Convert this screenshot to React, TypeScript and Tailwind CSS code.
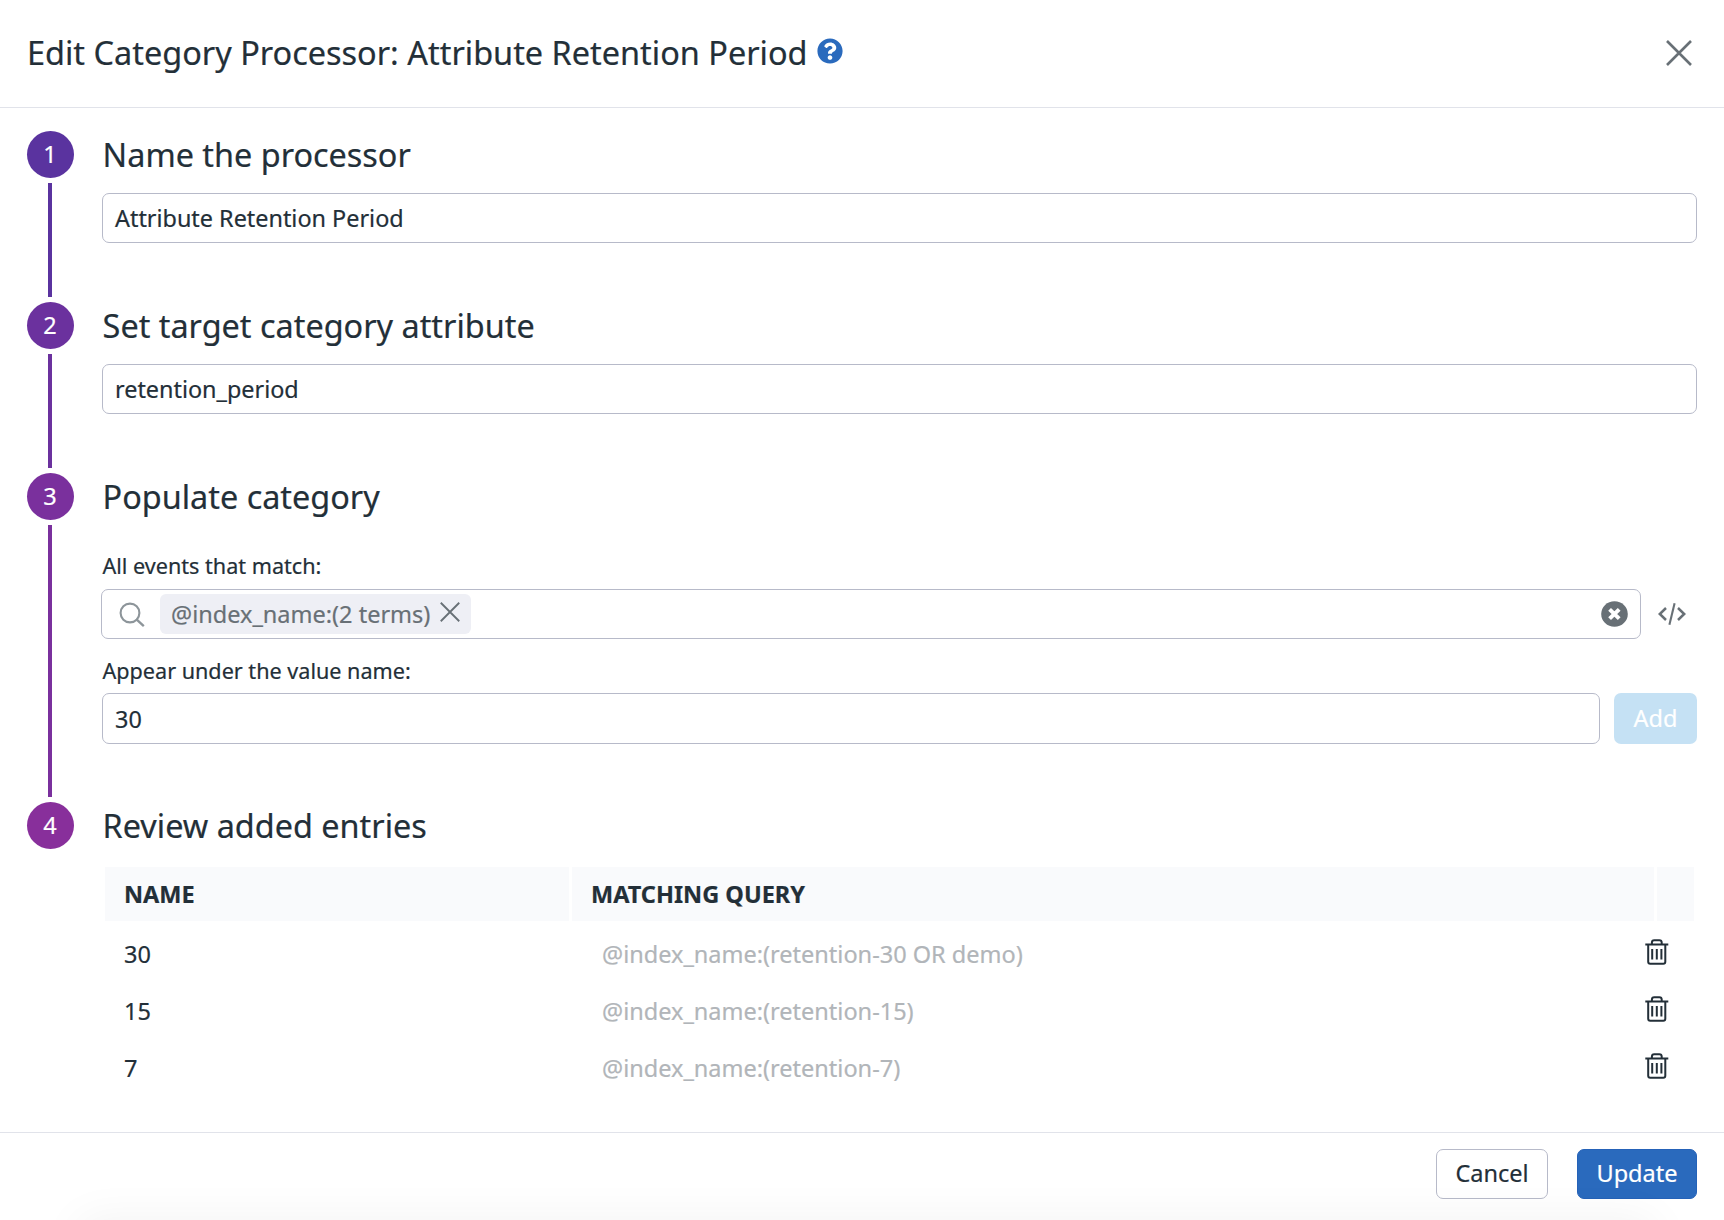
import React from "react";

const ENTRIES = [
  { name: "30", query: "@index_name:(retention-30 OR demo)" },
  { name: "15", query: "@index_name:(retention-15)" },
  { name: "7", query: "@index_name:(retention-7)" },
];

function CrossIcon({ className, width }: { className: string; width: number }) {
  return (
    <svg viewBox="0 0 26 26" className={className} fill="none" stroke="currentColor" strokeWidth={width}>
      <path d="M1 1 25 25M25 1 1 25" />
    </svg>
  );
}

function HelpIcon() {
  return (
    <svg viewBox="0 0 512 512" className="h-[26px] w-[26px] text-[#2a6abd]" fill="currentColor">
      <path d="M504 256c0 136.997-111.043 248-248 248S8 392.997 8 256C8 119.083 119.043 8 256 8s248 111.083 248 248zM262.655 90c-54.497 0-89.255 22.957-116.549 63.758-3.536 5.286-2.353 12.415 2.715 16.258l34.699 26.31c5.205 3.947 12.621 3.008 16.665-2.122 17.864-22.658 30.113-35.797 57.303-35.797 20.429 0 45.698 13.148 45.698 32.958 0 14.976-12.363 22.667-32.534 33.976C247.128 238.528 216 254.941 216 296v4c0 6.627 5.373 12 12 12h56c6.627 0 12-5.373 12-12v-1.333c0-28.462 83.186-29.647 83.186-106.667 0-58.002-60.165-102-116.531-102zM256 338c-25.365 0-46 20.635-46 46 0 25.364 20.635 46 46 46s46-20.636 46-46c0-25.365-20.635-46-46-46z" />
    </svg>
  );
}

function SearchIcon() {
  return (
    <svg viewBox="0 0 26 26" className="mt-px h-[26px] w-[26px] text-[#8d959a]" fill="none" stroke="currentColor" strokeWidth="2.1">
      <circle cx="11" cy="11" r="9.4" />
      <path d="m17.2 17.2 7.6 7" strokeWidth="2.4" />
    </svg>
  );
}

function ClearIcon() {
  return (
    <svg viewBox="0 0 27 26" className="h-[26px] w-[27px] text-[#687076]">
      <ellipse cx="13.5" cy="13" rx="13.3" ry="12.8" fill="currentColor" />
      <path d="m8.6 8.4 9.6 9.2m0-9.2-9.6 9.2" stroke="#fff" strokeWidth="4" fill="none" />
    </svg>
  );
}

function CodeIcon() {
  return (
    <svg viewBox="0 0 28 22" className="h-[22px] w-[28px] text-[#687076]" fill="none" stroke="currentColor" strokeWidth="2.5">
      <path d="M8 5 1.8 11 8 17M20 5l6.2 6L20 17" />
      <path d="M16.6.3 11.4 21.7" strokeWidth="2.1" />
    </svg>
  );
}

function TrashIcon() {
  return (
    <svg viewBox="0 0 24 26" className="h-[26px] w-[24px] text-[#232f38]" fill="none" stroke="currentColor" strokeWidth="2">
      <path d="M.3 5.6h23M3.2 5.6v17.2q0 2 2 2h13.1q2 0 2-2V5.6M6.9 5.6V3.6q0-2.4 2.4-2.4h5q2.4 0 2.4 2.4v2" />
      <path d="M7.2 9.9v10.6M11.8 9.9v10.6M16.4 9.9v10.6" strokeWidth="2" />
    </svg>
  );
}

function Step({
  n,
  dot,
  line,
  size,
  title,
  children,
}: {
  n: number;
  dot: string;
  line?: string;
  size: string;
  title: string;
  children: React.ReactNode;
}) {
  return (
    <section className={"flex " + size}>
      <div className="flex w-[47px] shrink-0 flex-col items-center">
        <div className={"flex h-[47px] w-[47px] shrink-0 items-center justify-center rounded-full pr-px pb-[2px] text-[23.5px] leading-[44px] text-white " + dot}>
          {n}
        </div>
        {line && <div className={"mt-[5px] mr-px mb-[5px] w-[4px] grow " + line} />}
      </div>
      <div className="ml-[28px] min-w-0 grow">
        <h2 className="h-[62px] pl-[0.6px] text-[32.4px] leading-[47px] whitespace-nowrap">{title}</h2>
        {children}
      </div>
    </section>
  );
}

function Field({ value, className }: { value: string; className: string }) {
  return (
    <div className={"flex items-center rounded-[7px] border border-[#b7bac9] bg-white px-[12px] pt-[2px] text-[23.4px] " + className}>
      {value}
    </div>
  );
}

export default function App() {
  return (
    <div className="flex h-[1220px] w-[1724px] flex-col overflow-hidden bg-white font-['Noto_Sans',sans-serif] text-[#232f38] [-webkit-text-stroke:0.2px]">
      <header className="flex h-[108px] shrink-0 justify-between border-b border-[#e1e3ea] pr-[32px] pl-[27px]">
        <div className="flex">
          <h1 className="text-[32.45px] leading-[105px] whitespace-nowrap">Edit Category Processor: Attribute Retention Period</h1>
          <div className="mt-[37.5px] ml-[9px]">
            <HelpIcon />
          </div>
        </div>
        <button className="mt-[39px] h-[27px]">
          <CrossIcon className="h-[26px] w-[26px] text-[#687076]" width={2.6} />
        </button>
      </header>

      <main className="grow pt-[23px] pr-[27px] pl-[27px]">
        <Step n={1} dot="bg-[#5a339f]" line="bg-[#5a339f]" size="h-[171px]" title="Name the processor">
          <Field value="Attribute Retention Period" className="h-[50px]" />
        </Step>
        <Step n={2} dot="bg-[#6b319e]" line="bg-[#6b319e]" size="h-[171px]" title="Set target category attribute">
          <Field value="retention_period" className="h-[50px]" />
        </Step>
        <Step n={3} dot="bg-[#7a309d]" line="bg-[#7a309d]" size="h-[329px]" title="Populate category">
          <div className="pt-[12px]">
            <div className="h-[42px] pl-[0.5px] text-[21.6px] leading-[37px]">All events that match:</div>
            <div className="-ml-px flex items-center">
              <div className="flex h-[50px] w-[1540px] items-center rounded-[7px] border border-[#b7bac9] pr-[12px] pl-[17px]">
                <SearchIcon />
                <div className="ml-[15px] flex h-[40px] w-[311px] items-center rounded-[6px] bg-[#eeeff5] pl-[11px] text-[23.5px] text-[#687076]">
                  <span className="pt-[2px] whitespace-nowrap">@index_name:(2 terms)</span>
                  <CrossIcon className="mr-[11px] mb-[5px] ml-auto h-[20px] w-[20px]" width={2.4} />
                </div>
                <div className="ml-auto">
                  <ClearIcon />
                </div>
              </div>
              <div className="ml-[17px]">
                <CodeIcon />
              </div>
            </div>
            <div className="h-[54px] pt-[12px] pl-[0.5px] text-[21.6px] leading-[39px]">Appear under the value name:</div>
            <div className="flex gap-[14px]">
              <Field value="30" className="h-[51px] grow" />
              <button className="h-[51px] w-[83px] rounded-[7px] bg-[#c5e1f4] pt-px text-[23.5px] text-white">Add</button>
            </div>
          </div>
        </Step>
        <Step n={4} dot="bg-[#882f9b]" size="" title="Review added entries">
          <div className="mr-[3px] ml-[3px] grid grid-cols-[464px_1082px_1fr] gap-x-[3px] pt-[3px] text-[23.5px]">
            <div className="h-[54px] bg-[#f9fafc] pl-[19px] leading-[54px] font-bold">NAME</div>
            <div className="h-[54px] bg-[#f9fafc] pl-[19px] leading-[54px] font-bold">MATCHING QUERY</div>
            <div className="h-[54px] bg-[#f9fafc]" />
          </div>
          <div className="pt-[4px] text-[23.5px]">
            {ENTRIES.map((e) => (
              <div key={e.name} className="flex h-[57px] pr-[28px] pl-[22px] leading-[58px]">
                <div className="w-[478px]">{e.name}</div>
                <div className="grow text-[#b1b5b9]">{e.query}</div>
                <div className="pt-[14px]">
                  <TrashIcon />
                </div>
              </div>
            ))}
          </div>
        </Step>
      </main>

      <footer className="relative flex h-[88px] shrink-0 justify-end gap-[29px] border-t border-[#e1e3ea] pt-[16px] pr-[27px] text-[23.5px]">
        <div className="absolute top-full right-[70px] left-[80px] h-[60px] shadow-[0_0_46px_rgba(0,0,0,0.055)]" />
        <button className="h-[50px] w-[112px] rounded-[7px] border border-[#b7bac9] bg-white">Cancel</button>
        <button className="h-[50px] w-[120px] rounded-[7px] border border-[#2562b8] bg-[#2a6abd] text-white">Update</button>
      </footer>
    </div>
  );
}
